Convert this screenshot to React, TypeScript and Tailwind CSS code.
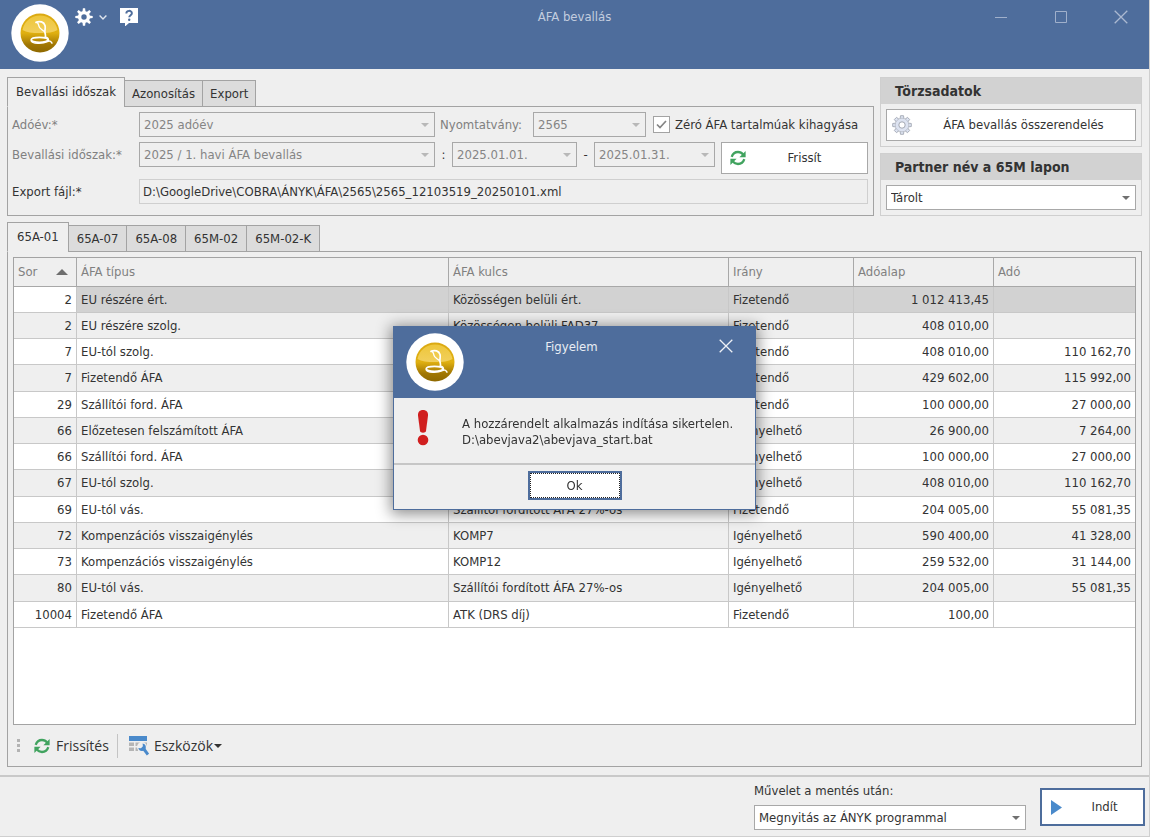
import * as React from "react";
import clsx from "clsx";

type Row = {
  sor: string;
  tipus: string;
  kulcs: string;
  irany: string;
  alap: string;
  ado: string;
};

const rows: Row[] = [
  { sor: "2", tipus: "EU részére ért.", kulcs: "Közösségen belüli ért.", irany: "Fizetendő", alap: "1 012 413,45", ado: "" },
  { sor: "2", tipus: "EU részére szolg.", kulcs: "Közösségen belüli FAD37", irany: "Fizetendő", alap: "408 010,00", ado: "" },
  { sor: "7", tipus: "EU-tól szolg.", kulcs: "Közösségen belüli szolg.", irany: "Fizetendő", alap: "408 010,00", ado: "110 162,70" },
  { sor: "7", tipus: "Fizetendő ÁFA", kulcs: "27%-os", irany: "Fizetendő", alap: "429 602,00", ado: "115 992,00" },
  { sor: "29", tipus: "Szállítói ford. ÁFA", kulcs: "Szállítói fordított ÁFA 27%-os", irany: "Fizetendő", alap: "100 000,00", ado: "27 000,00" },
  { sor: "66", tipus: "Előzetesen felszámított ÁFA", kulcs: "27%-os", irany: "Igényelhető", alap: "26 900,00", ado: "7 264,00" },
  { sor: "66", tipus: "Szállítói ford. ÁFA", kulcs: "Szállítói fordított ÁFA 27%-os", irany: "Igényelhető", alap: "100 000,00", ado: "27 000,00" },
  { sor: "67", tipus: "EU-tól szolg.", kulcs: "Közösségen belüli szolg.", irany: "Igényelhető", alap: "408 010,00", ado: "110 162,70" },
  { sor: "69", tipus: "EU-tól vás.", kulcs: "Szállítói fordított ÁFA 27%-os", irany: "Fizetendő", alap: "204 005,00", ado: "55 081,35" },
  { sor: "72", tipus: "Kompenzációs visszaigénylés", kulcs: "KOMP7", irany: "Igényelhető", alap: "590 400,00", ado: "41 328,00" },
  { sor: "73", tipus: "Kompenzációs visszaigénylés", kulcs: "KOMP12", irany: "Igényelhető", alap: "259 532,00", ado: "31 144,00" },
  { sor: "80", tipus: "EU-tól vás.", kulcs: "Szállítói fordított ÁFA 27%-os", irany: "Igényelhető", alap: "204 005,00", ado: "55 081,35" },
  { sor: "10004", tipus: "Fizetendő ÁFA", kulcs: "ATK (DRS díj)", irany: "Fizetendő", alap: "100,00", ado: "" },
];

function Logo() {
  const id = React.useId();
  return (
    <svg viewBox="0 0 58 58" className="h-[58px] w-[58px] shrink-0" aria-hidden>
      <defs>
        <linearGradient id={id} x1="0" y1="0" x2="0" y2="1">
          <stop offset="0" stopColor="#dba912" />
          <stop offset="0.5" stopColor="#e0b010" />
          <stop offset="0.8" stopColor="#a07603" />
          <stop offset="1" stopColor="#8f6900" />
        </linearGradient>
        <linearGradient id={`${id}g`} x1="0" y1="0" x2="0" y2="1">
          <stop offset="0" stopColor="#eec63a" />
          <stop offset="1" stopColor="#f1cf5c" />
        </linearGradient>
      </defs>
      <circle cx="29" cy="29" r="28.7" fill="#fff" />
      <circle cx="29" cy="29" r="19.5" fill={`url(#${id})`} />
      <path d="M11.500 26a17.800 17.800 0 0 1 35 0c-4 2.600-10 3-17.500 3s-13.500-.4-17.500-3z" fill={`url(#${id}g)`} />
      <path
        d="M25 18.300c3.800-1.700 8-.4 9 3.200.9 3-.5 4.500-.1 6.800.4 2.200 1.300 3.800.1 5.200"
        fill="none"
        stroke="#fff"
        strokeWidth="1.700"
        strokeLinecap="round"
      />
      <path d="M25 18.300c2.600 0 2.600 2 2.900 3.800.4 2.600 3 3.200 5.400 5.400" fill="none" stroke="#fff" strokeWidth="1.300" />
      <ellipse cx="28.500" cy="35.800" rx="8.300" ry="2.500" fill="none" stroke="#fff" strokeWidth="1.700" />
      <path d="M20 36.400c.8 3.800 12 3.600 16.300 1.200 2.600-1.300 4-.2 5 2M34 33c2.600.2 4 1.800 3.300 3.800" fill="none" stroke="#fff" strokeWidth="1.400" />
    </svg>
  );
}

const teeth = [0, 45, 90, 135, 180, 225, 270, 315];

function GearIcon() {
  return (
    <svg viewBox="0 0 18 18" className="h-[18px] w-[18px]" aria-hidden>
      <circle cx="9" cy="9" r="4.400" fill="none" stroke="#fff" strokeWidth="3.400" />
      {teeth.map((a) => (
        <path key={a} d="M7.400 4 7.900.3h2.200l.5 3.700z" fill="#fff" transform={`rotate(${a} 9 9)`} />
      ))}
    </svg>
  );
}

function SoftGearIcon() {
  return (
    <svg viewBox="0 0 20 20" className="h-5 w-5" aria-hidden>
      {teeth.map((a) => (
        <path key={a} d="M8 4.500 8.500.7h3l.5 3.800z" fill="#dde3f1" stroke="#a3a8b3" strokeWidth="0.900" transform={`rotate(${a} 10 10)`} />
      ))}
      <circle cx="10" cy="10" r="6.800" fill="#dde3f1" stroke="#b3b8c2" strokeWidth="0.700" />
      <circle cx="10" cy="10" r="3.200" fill="#fff" stroke="#a3a8b3" strokeWidth="1" />
    </svg>
  );
}

function RefreshIcon() {
  return (
    <svg viewBox="0 0 16 16" className="h-4 w-4" aria-hidden>
      <g fill="none" stroke="#41a35f" strokeWidth="2.300">
        <path d="M1.700 6.800C2.700 3.700 5 2 8 2c2.200 0 3.900.9 5.200 2.600" />
        <path d="M14.300 9.200C13.300 12.300 11 14 8 14c-2.200 0-3.900-.9-5.200-2.600" />
      </g>
      <path d="M15.600 1v6.200H9.400z" fill="#41a35f" />
      <path d="M.4 15V8.800h6.200z" fill="#41a35f" />
    </svg>
  );
}

function ToolsIcon() {
  return (
    <svg viewBox="0 0 20 20" className="h-5 w-5" aria-hidden>
      <path d="M0 0h18v5H0z" fill="#4a8acb" />
      <path d="M0 6.500h5v3.500H0zM6.500 6.500h5v3.500h-5zM13 6.500h5v3.500h-5zM0 11.500h5V15H0zM6.500 11.500h2.500V15H6.500z" fill="#b5b5b5" />
      <circle cx="13" cy="11" r="5" fill="#efefef" />
      <path d="M14.500 12.500 19 18.600" stroke="#4a8acb" strokeWidth="3" />
      <path d="M13.600 7.400a3.800 3.800 0 1 1-4.300 4.500l2.700.3 1.900-1.900z" fill="#4a8acb" />
    </svg>
  );
}

function Caret({ className }: { className?: string }) {
  return (
    <svg viewBox="0 0 8 4" className={clsx("h-1 w-2", className)} aria-hidden>
      <path d="M0 0h8L4 4z" fill="currentColor" />
    </svg>
  );
}

function CloseIcon() {
  return (
    <svg viewBox="0 0 14 14" className="h-3.5 w-3.5" aria-hidden>
      <path d="M.7.7l12.600 12.600M13.300.7.700 13.300" stroke="currentColor" strokeWidth="1.300" />
    </svg>
  );
}

interface ComboProps {
  value: string;
  id?: string;
  label?: string;
  disabled?: boolean;
  className?: string;
}

function Combo({ value, id, label, disabled, className }: ComboProps) {
  return (
    <div className={clsx("relative h-[25px]", className)}>
      <select
        id={id}
        aria-label={label}
        disabled={disabled}
        className={clsx(
          "h-full w-full appearance-none border border-[#a8a8a8] pr-5 pl-1 opacity-100 focus:outline-none",
          disabled ? "bg-[#efefef] text-[#858585]" : "bg-white text-[#333]"
        )}
      >
        <option>{value}</option>
      </select>
      <Caret
        className={clsx(
          "pointer-events-none absolute top-1/2 right-1.5 -translate-y-1/2",
          disabled ? "text-[#b8b8b8]" : "text-[#707070]"
        )}
      />
    </div>
  );
}

function Tabs({ items, roomy }: { items: string[]; roomy?: boolean }) {
  const [active, setActive] = React.useState(0);
  return (
    <div role="tablist" className="relative z-10 -mb-px flex items-end">
      {items.map((item, i) => (
        <button
          key={item}
          type="button"
          role="tab"
          aria-selected={i === active}
          onClick={() => setActive(i)}
          className={clsx(
            "border border-[#a3a3a3]",
            i > 0 && "-ml-px",
            i === active
              ? clsx("h-[30px] border-b-[#efefef] bg-[#efefef]", roomy ? "px-[9px]" : "px-2")
              : clsx("h-[27px] bg-[#dcdcdc]", roomy ? "px-2" : "px-[7px]")
          )}
        >
          {item}
        </button>
      ))}
    </div>
  );
}

function Group({ title, children }: { title: string; children: React.ReactNode }) {
  return (
    <section className="border border-[#cfcfcf]">
      <h2 className="h-[26px] bg-[#d2d2d2] pl-3.5 text-sm leading-[26px] font-bold">{title}</h2>
      <div className="p-[5px]">{children}</div>
    </section>
  );
}

function Grid() {
  const head = "border-r border-b border-[#a8a8a8] pl-1 text-left font-normal text-[#808080] last:border-r-0";
  const cell = "border-r border-b border-[#c8c8c8] px-1 whitespace-nowrap overflow-hidden last:border-r-0";
  return (
    <div className="flex-1 border border-[#a3a3a3] bg-white">
      <table className="w-full table-fixed border-separate border-spacing-0">
        <colgroup>
          <col className="w-[63px]" />
          <col />
          <col className="w-[280px]" />
          <col className="w-[125px]" />
          <col className="w-[140px]" />
          <col className="w-[141px]" />
        </colgroup>
        <thead>
          <tr className="h-[29px] bg-[#efefef]">
            <th className={head}>
              <div className="flex items-center justify-between pr-2">
                Sor
                <svg viewBox="0 0 12 6" className="h-1.5 w-3" aria-hidden>
                  <path d="M0 6 6 0l6 6z" fill="#6e6e6e" />
                </svg>
              </div>
            </th>
            <th className={head}>ÁFA típus</th>
            <th className={head}>ÁFA kulcs</th>
            <th className={head}>Irány</th>
            <th className={head}>Adóalap</th>
            <th className={head}>Adó</th>
          </tr>
        </thead>
        <tbody>
          {rows.map((r, i) => (
            <tr
              key={i}
              className={clsx(
                "h-[26px] nth-[4n]:h-[27px]",
                i === 0 ? "bg-[#d2d2d2]" : i % 2 === 1 ? "bg-[#efefef]" : "bg-white"
              )}
            >
              <td className={clsx(cell, "text-right", i === 0 && "bg-white")}>{r.sor}</td>
              <td className={cell}>{r.tipus}</td>
              <td className={cell}>{r.kulcs}</td>
              <td className={cell}>{r.irany}</td>
              <td className={clsx(cell, "text-right")}>{r.alap}</td>
              <td className={clsx(cell, "text-right")}>{r.ado}</td>
            </tr>
          ))}
        </tbody>
      </table>
    </div>
  );
}

function WarningDialog() {
  return (
    <div className="fixed inset-0 z-50 flex items-center justify-center pr-px pb-px">
      <div
        role="dialog"
        aria-labelledby="dialog-title"
        className="w-[363px] border border-[#4e6d9c] bg-[#efefef] shadow-[0_2px_14px_2px_rgba(0,0,0,0.45)]"
      >
        <div className="grid h-[71px] grid-cols-[1fr_auto_1fr] items-start bg-[#4e6d9c] pt-1.5 pr-[22px] pl-3">
          <Logo />
          <h2 id="dialog-title" className="pt-1.5 pl-1 text-[#e9edf4]">
            Figyelem
          </h2>
          <button type="button" aria-label="Bezárás" className="mt-1.5 justify-self-end text-[#eef1f6]">
            <CloseIcon />
          </button>
        </div>
        <div className="flex h-[67px] border-b-2 border-[#c6c6c6] pt-3 pl-5">
          <svg viewBox="0 0 18 36" className="h-9 w-[18px]" aria-hidden>
            <path d="M9 0c3.300 0 5.300 2.200 5 5.400L12 21c-.3 2.300-5.700 2.300-6 0L4 5.400C3.700 2.200 5.700 0 9 0z" fill="#d01f1f" />
            <circle cx="9" cy="30" r="5.300" fill="#d01f1f" />
          </svg>
          <p className="pt-1.5 pl-[30px] leading-4 whitespace-nowrap">
            A hozzárendelt alkalmazás indítása sikertelen.
            <br />
            D:\abevjava2\abevjava_start.bat
          </p>
        </div>
        <div className="flex h-11 items-start justify-center pt-1.5">
          <button type="button" className="h-[29px] w-[94px] border-2 border-[#4e6d9c] bg-white">
            <span className="flex h-full items-center justify-center border border-dotted border-[#222]">Ok</span>
          </button>
        </div>
      </div>
    </div>
  );
}

export default function App() {
  return (
    <div className="flex min-h-screen flex-col border-r border-b border-[#cfcfcf] bg-[#efefef] font-['DejaVu_Sans_Condensed','DejaVu_Sans',sans-serif] text-[13px] leading-4 text-[#333]">
      <header className="grid h-[69px] grid-cols-[1fr_auto_1fr] items-start bg-[#4e6d9c] text-[#c3cddf]">
        <div className="flex items-start pt-1 pl-[11px]">
          <Logo />
          <button type="button" aria-label="Beállítások" className="mt-1 ml-1.5 flex items-center gap-1.5">
            <GearIcon />
            <svg viewBox="0 0 8 5" className="h-[5px] w-2" aria-hidden>
              <path d="M.6.6 4 4 7.400.6" fill="none" stroke="#dfe5ee" strokeWidth="1.400" />
            </svg>
          </button>
          <button type="button" aria-label="Súgó" className="mt-1 ml-[13px]">
            <svg viewBox="0 0 18 18" className="h-[18px] w-[18px]" aria-hidden>
              <path d="M0 0h18v15H9l-4 3.500V15H0z" fill="#fff" />
              <path d="M6.300 5.400c0-3.400 5.600-3.400 5.600-.2 0 2-2.700 2-2.700 4.100" fill="none" stroke="#4e6d9c" strokeWidth="1.900" />
              <circle cx="9.200" cy="11.800" r="1.200" fill="#4e6d9c" />
            </svg>
          </button>
        </div>
        <h1 className="pt-[9px]">ÁFA bevallás</h1>
        <div className="flex justify-end gap-[46px] pt-2.5 pr-[21px]">
          <button type="button" aria-label="Kis méret" className="w-3.5">
            <svg viewBox="0 0 14 14" className="h-3.5 w-3.5 opacity-70" aria-hidden>
              <path d="M1 7.500h12" stroke="currentColor" />
            </svg>
          </button>
          <button type="button" aria-label="Teljes méret" className="w-3.5">
            <svg viewBox="0 0 14 14" className="h-3.5 w-3.5 opacity-70" aria-hidden>
              <path d="M1.500 1.500h11v11h-11z" fill="none" stroke="currentColor" />
            </svg>
          </button>
          <button type="button" aria-label="Bezárás" className="w-3.5 opacity-80">
            <CloseIcon />
          </button>
        </div>
      </header>

      <main className="flex flex-1 flex-col gap-1.5 px-[7px] pt-2 pb-2">
        <div className="flex gap-1.5">
          <div className="flex flex-1 flex-col">
            <Tabs items={["Bevallási időszak", "Azonosítás", "Export"]} />
            <div className="flex flex-1 flex-col gap-[5px] border border-[#a3a3a3] pt-[5px] pr-[5px] pl-1">
              <div className="flex items-center">
                <label htmlFor="ev" className="w-[127px] text-[#808080]">
                  Adóév:*
                </label>
                <Combo id="ev" value="2025 adóév" disabled className="flex-1" />
                <label htmlFor="nyomtatvany" className="w-[98px] pl-[5px] text-[#808080]">
                  Nyomtatvány:
                </label>
                <Combo id="nyomtatvany" value="2565" disabled className="w-[113px]" />
                <label className="flex w-[222px] items-center gap-[5px] pl-[7px] whitespace-nowrap">
                  <span className="relative h-[17px] w-[17px]">
                    <input
                      type="checkbox"
                      defaultChecked
                      className="peer block h-[17px] w-[17px] appearance-none border border-[#a3a3a3] bg-white"
                    />
                    <svg viewBox="0 0 11 9" className="pointer-events-none absolute top-1 left-[3px] hidden h-[9px] w-[11px] peer-checked:block" aria-hidden>
                      <path d="M1 4.500 4 7.500 10 1" fill="none" stroke="#858585" strokeWidth="1.700" />
                    </svg>
                  </span>
                  Zéró ÁFA tartalmúak kihagyása
                </label>
              </div>
              <div className="flex items-start">
                <label htmlFor="idoszak" className="w-[127px] leading-[25px] whitespace-nowrap text-[#808080]">
                  Bevallási időszak:*
                </label>
                <Combo id="idoszak" value="2025 / 1. havi ÁFA bevallás" disabled className="flex-1" />
                <span className="w-[17px] text-center leading-[25px]">:</span>
                <Combo label="Időszak kezdete" value="2025.01.01." disabled className="w-[125px]" />
                <span className="w-[17px] text-center leading-[25px]">-</span>
                <Combo label="Időszak vége" value="2025.01.31." disabled className="w-[121px]" />
                <button type="button" className="ml-1.5 flex h-8 w-[147px] items-center border border-[#a8a8a8] bg-white pl-2">
                  <RefreshIcon />
                  <span className="flex-1 pr-1 text-center">Frissít</span>
                </button>
              </div>
              <div className="flex items-center">
                <label htmlFor="export" className="w-[127px]">
                  Export fájl:*
                </label>
                <input
                  id="export"
                  type="text"
                  readOnly
                  value="D:\GoogleDrive\COBRA\ÁNYK\ÁFA\2565\2565_12103519_20250101.xml"
                  className="h-[25px] flex-1 border border-[#cfcfcf] bg-[#efefef] px-[3px] focus:outline-none"
                />
              </div>
            </div>
          </div>

          <aside className="flex w-[262px] flex-col gap-1.5">
            <Group title="Törzsadatok">
              <button type="button" className="flex h-8 w-full items-center border border-[#a8a8a8] bg-white pl-[5px]">
                <SoftGearIcon />
                <span className="flex-1 text-center whitespace-nowrap">ÁFA bevallás összerendelés</span>
              </button>
            </Group>
            <Group title="Partner név a 65M lapon">
              <Combo label="Partner név a 65M lapon" value="Tárolt" />
            </Group>
          </aside>
        </div>

        <div className="flex flex-1 flex-col">
          <Tabs items={["65A-01", "65A-07", "65A-08", "65M-02", "65M-02-K"]} roomy />
          <div className="flex flex-1 flex-col border border-[#a3a3a3] px-[5px] pt-[5px]">
            <Grid />
            <div className="flex h-[41px] items-center font-[family-name:'Open_Sans',sans-serif] text-sm leading-4">
              <svg viewBox="0 0 3 13" className="mr-3.5 ml-1 h-[13px] w-[3px]" aria-hidden>
                <path d="M0 0h3v3H0zM0 5h3v3H0zM0 10h3v3H0z" fill="#b3b3b3" />
              </svg>
              <button type="button" className="flex items-center gap-1.5">
                <RefreshIcon />
                Frissítés
              </button>
              <span className="mr-[11px] ml-2 h-6 w-px bg-[#c4c4c4]" />
              <button type="button" className="flex items-center gap-[5px]">
                <ToolsIcon />
                Eszközök
                <Caret className="-ml-1" />
              </button>
            </div>
          </div>
        </div>
      </main>

      <footer className="flex justify-end gap-3.5 border-t-2 border-[#c9c9c9] pr-1 pb-1.5">
        <div className="flex w-[272px] flex-col gap-1.5 pt-1.5">
          <label htmlFor="muvelet">Művelet a mentés után:</label>
          <Combo id="muvelet" value="Megnyitás az ÁNYK programmal" />
        </div>
        <button type="button" className="mt-[11px] flex h-[38px] w-[105px] items-center border-2 border-[#4e6d9c] bg-white pl-[9px]">
          <svg viewBox="0 0 11 15" className="h-[15px] w-[11px]" aria-hidden>
            <path d="M0 0l11 7.500L0 15z" fill="#4a8acb" />
          </svg>
          <span className="flex-1 pl-1 text-center">Indít</span>
        </button>
      </footer>

      <WarningDialog />
    </div>
  );
}
